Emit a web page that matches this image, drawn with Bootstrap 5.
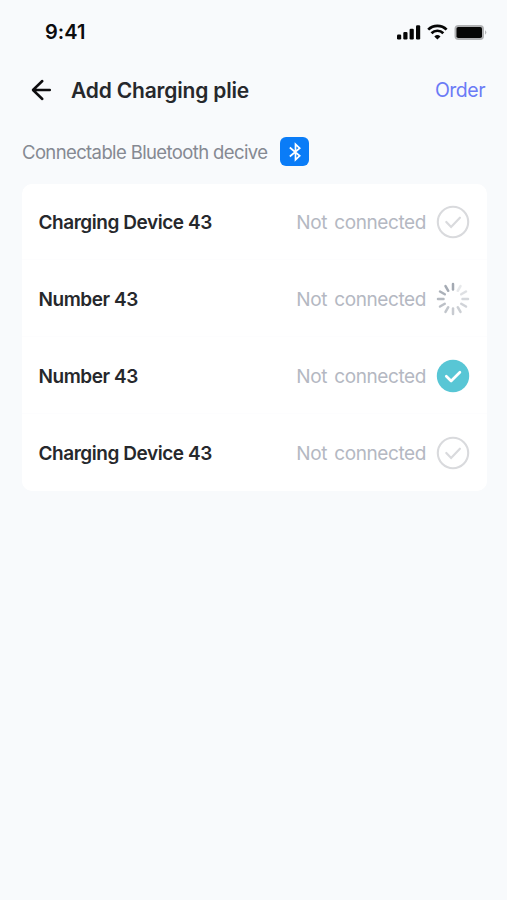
<!DOCTYPE html>
<html lang="en">
<head>
<meta charset="utf-8">
<meta name="viewport" content="width=device-width, initial-scale=1">
<title>Add Charging plie</title>
<link href="https://cdn.jsdelivr.net/npm/bootstrap@5.3.0/dist/css/bootstrap.min.css" rel="stylesheet">
<style>
  body { font-family: Inter, "Liberation Sans", sans-serif; background: #f8fafc; color: #26282c; min-height: 100vh; line-height: 1.2; overflow: hidden; }
  svg { display: block; flex: none; }
  .status-bar { height: 63px; padding: 0 20px 0 45px; color: #0c0c0e; }
  .clock { font-size: 20px; font-weight: 600; letter-spacing: .05px; }
  .top-bar { height: 54px; padding: 0 22px 0 30px; }
  .page-title { font-size: 21px; font-weight: 600; letter-spacing: -.18px; margin-left: 19px; padding-top: 2px; }
  .order-link { font-size: 19.5px; letter-spacing: -.5px; color: #6b7bf6; padding-top: 2px; }
  .section-head { height: 67px; padding: 2px 22px 0; gap: 13px; color: #858992; }
  .section-label { font-size: 18.5px; letter-spacing: -.62px; padding-top: 1px; }
  .bt-tile { width: 29px; height: 29px; border-radius: 6px; background: #0a7cf7; }
  .device-list { margin: 0 20px 0 22px; border-radius: 10px; --bs-list-group-border-color: #fdfdfe; }
  .device-row { height: 77px; padding: 1px 17px 0 16.5px; color: #26282c; }
  .device-row:first-child { height: 76px; }
  .device-row:last-child { padding-top: 0; }
  .device-name { font-size: 19px; font-weight: 600; letter-spacing: -.45px; padding-top: 3px; }
  .device-state { font-size: 19px; letter-spacing: -.4px; word-spacing: 2.2px; color: #b4b8c2; margin-right: 10px; padding-top: 3px; }
</style>
</head>
<body>
<header>
  <div class="status-bar d-flex align-items-center justify-content-between">
    <span class="clock">9:41</span>
    <svg width="92" height="20" viewBox="0 0 92 20" fill="#060606">
      <rect x="2" y="12.500" width="4.200" height="5" rx="1.200"/><rect x="8.300" y="9.900" width="4.200" height="7.600" rx="1.200"/><rect x="14.600" y="6.700" width="4.200" height="10.800" rx="1.200"/><rect x="21" y="3.300" width="4.200" height="14.200" rx="1.200"/>
      <g transform="translate(0 -1)"><path d="M33.200 8.600a13 13 0 0 1 18.400 0M36.500 12.200a8.300 8.300 0 0 1 11.800 0" fill="none" stroke="#060606" stroke-width="2.700"/>
      <path d="M39.300 15.500a4.600 4.600 0 0 1 6.200 0L42.400 18.600z"/></g>
      <rect x="59.500" y="3" width="29.500" height="15" rx="4" fill="#b0b1b3"/><rect x="61.500" y="5" width="25.500" height="11" rx="1.800"/><path d="M90.200 8.300q2.200 2.200 0 4.400z" fill="#a8a9ac"/>
    </svg>
  </div>
  <nav class="top-bar d-flex align-items-center">
    <svg width="22" height="22" viewBox="0 0 22 22" fill="none" stroke="#0d0d0f" stroke-width="2.500" stroke-linecap="round" stroke-linejoin="round"><path d="M12.300 2 3 11l9.300 9M3.200 11h16.600"/></svg>
    <h1 class="page-title mb-0">Add Charging plie</h1>
    <a href="#" class="order-link ms-auto text-decoration-none">Order</a>
  </nav>
</header>
<main>
  <div class="section-head d-flex align-items-center">
    <span class="section-label">Connectable Bluetooth decive</span>
    <span class="bt-tile d-flex align-items-center justify-content-center">
      <svg width="16" height="20" viewBox="0 0 16 20" fill="none" stroke="#fff" stroke-width="1.700"><path d="M2.800 5.500 12.700 13.800 8.500 17.700V2.300L12.700 6.200 2.800 14.500"/></svg>
    </span>
  </div>
  <ul class="device-list list-group list-group-flush bg-white overflow-hidden">
    <li class="device-row list-group-item d-flex align-items-center">
      <span class="device-name">Charging Device 43</span><span class="device-state ms-auto">Not connected</span>
      <svg width="34" height="34" viewBox="0 0 34 34" fill="none" stroke="#d9dadd"><circle cx="17" cy="17" r="15.200" stroke-width="2.100"/><path d="m10.300 17 4.800 5 8.800-9.300" stroke-width="2.200" stroke-linecap="round"/></svg>
    </li>
    <li class="device-row list-group-item d-flex align-items-center">
      <span class="device-name">Number 43</span><span class="device-state ms-auto">Not connected</span>
      <svg width="34" height="34" viewBox="-17 -17 34 34" stroke="#a3a9b2" stroke-width="2.500" stroke-linecap="round">
        <path d="M0-15v5.500"/><path d="M0-15v5.500" transform="rotate(30)" opacity=".25"/><path d="M0-15v5.500" transform="rotate(60)" opacity=".35"/><path d="M0-15v5.500" transform="rotate(90)" opacity=".45"/><path d="M0-15v5.500" transform="rotate(120)" opacity=".5"/><path d="M0-15v5.500" transform="rotate(150)" opacity=".55"/><path d="M0-15v5.500" transform="rotate(180)" opacity=".6"/><path d="M0-15v5.500" transform="rotate(210)" opacity=".66"/><path d="M0-15v5.500" transform="rotate(240)" opacity=".72"/><path d="M0-15v5.500" transform="rotate(270)" opacity=".8"/><path d="M0-15v5.500" transform="rotate(300)" opacity=".9"/><path d="M0-15v5.500" transform="rotate(330)" opacity=".97"/>
      </svg>
    </li>
    <li class="device-row list-group-item d-flex align-items-center">
      <span class="device-name">Number 43</span><span class="device-state ms-auto">Not connected</span>
      <svg width="34" height="34" viewBox="0 0 34 34" fill="none"><circle cx="17" cy="17" r="16.200" fill="#58c6d5"/><path d="m10.300 17.300 4.800 4.700 8.800-8.800" stroke="#fff" stroke-width="2.700" stroke-linecap="round" stroke-linejoin="round"/></svg>
    </li>
    <li class="device-row list-group-item d-flex align-items-center">
      <span class="device-name">Charging Device 43</span><span class="device-state ms-auto">Not connected</span>
      <svg width="34" height="34" viewBox="0 0 34 34" fill="none" stroke="#d9dadd"><circle cx="17" cy="17" r="15.200" stroke-width="2.100"/><path d="m10.300 17 4.800 5 8.800-9.300" stroke-width="2.200" stroke-linecap="round"/></svg>
    </li>
  </ul>
</main>
<script src="https://cdn.jsdelivr.net/npm/bootstrap@5.3.0/dist/js/bootstrap.bundle.min.js"></script>
</body>
</html>
